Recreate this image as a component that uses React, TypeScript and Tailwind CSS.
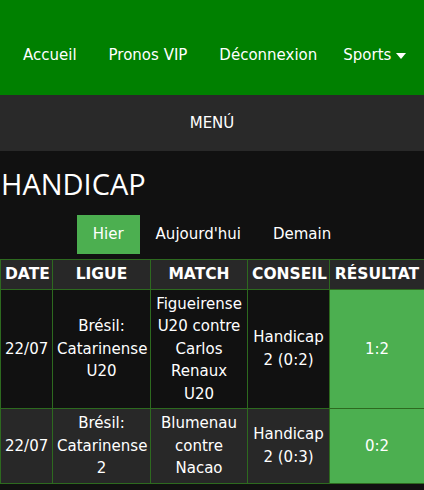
const rows = [
  {
    date: '22/07',
    ligue: 'Brésil: Catarinense U20',
    match: 'Figueirense U20 contre Carlos Renaux U20',
    conseil: 'Handicap 2 (0:2)',
    resultat: '1:2',
    bg: 'bg-[#111111]',
  },
  {
    date: '22/07',
    ligue: 'Brésil: Catarinense 2',
    match: 'Blumenau contre Nacao',
    conseil: 'Handicap 2 (0:3)',
    resultat: '0:2',
    bg: 'bg-[#282828]',
  },
]

const cell = 'border border-[#2d6a1f] px-[4px] py-[3px] text-center align-middle'

export default function App() {
  return (
    <div className="min-h-[490px] bg-[#111111] text-white font-['DejaVu_Sans',Verdana,sans-serif] text-[15px] leading-[22.5px]">
      {/* Top nav */}
      <nav className="flex h-[95px] items-center bg-[#008000] pl-[7px] pt-[16px]">
        <a className="px-4">Accueil</a>
        <a className="px-4">Pronos VIP</a>
        <a className="px-4">Déconnexion</a>
        <a className="flex items-center gap-[5px] pl-[10px]">
          Sports
          <svg width="10" height="6" viewBox="0 0 10 6" className="mt-[1px]">
            <path d="M0 0h10L5 6z" fill="white" />
          </svg>
        </a>
      </nav>

      {/* Menu bar */}
      <div className="flex h-[56px] items-center justify-center bg-[#292929]">MENÚ</div>

      {/* Title */}
      <h1 className="pl-[1px] pt-[13px] font-['Open_Sans',sans-serif] text-[29px] font-normal leading-[40px]">
        HANDICAP
      </h1>

      {/* Tabs */}
      <div className="mt-[11px] flex justify-center">
        <button className="h-[39px] bg-[#4caf50] px-4">Hier</button>
        <button className="h-[39px] px-4">Aujourd'hui</button>
        <button className="h-[39px] px-4">Demain</button>
      </div>

      {/* Table */}
      <table className="mt-[5px] w-[424px] table-fixed border-collapse">
        <colgroup>
          <col className="w-[52px]" />
          <col className="w-[98px]" />
          <col className="w-[97px]" />
          <col className="w-[82px]" />
          <col className="w-[95px]" />
        </colgroup>
        <thead>
          <tr className="bg-[#282828] text-[15.5px] font-bold">
            <th className={`${cell} px-0`}>DATE</th>
            <th className={cell}>LIGUE</th>
            <th className={cell}>MATCH</th>
            <th className={`${cell} px-0`}>CONSEIL</th>
            <th className={`${cell} px-0`}>RÉSULTAT</th>
          </tr>
        </thead>
        <tbody>
          {rows.map((r, i) => (
            <tr key={i} className={r.bg}>
              <td className={`${cell} px-0`}>{r.date}</td>
              <td className={`${cell} px-0`}>{r.ligue}</td>
              <td className={cell}>{r.match}</td>
              <td className={`${cell} px-0`}>{r.conseil}</td>
              <td className={`${cell} bg-[#4caf50]`}>{r.resultat}</td>
            </tr>
          ))}
        </tbody>
      </table>
    </div>
  )
}
